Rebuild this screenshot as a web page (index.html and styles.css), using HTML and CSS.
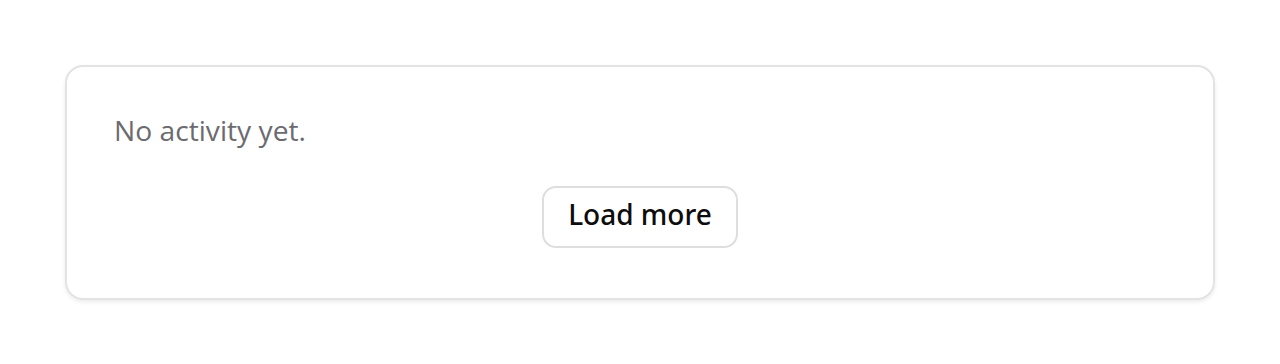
FILE: index.html
```html
<!DOCTYPE html>
<html lang="en">
<head>
<meta charset="utf-8">
<link rel="stylesheet" href="styles.css">
</head>
<body>
<main class="page">
  <section class="card">
    <p class="empty">No activity yet.</p>
    <div class="actions">
      <button class="load-more" type="button">Load more</button>
    </div>
  </section>
</main>
</body>
</html>
```
FILE: styles.css
```css
html, body {
  margin: 0;
  padding: 0;
  background: #ffffff;
}
body {
  font-family: "Open Sans", "Noto Sans", sans-serif;
}
.page {
  padding: 65px;
}
.card {
  border: 2px solid #e3e3e3;
  border-radius: 18px;
  box-shadow: 0 2px 4px rgba(0, 0, 0, 0.08);
  padding: 42px 47px 50px;
}
.empty {
  margin: 0;
  font-size: 28.2px;
  line-height: 42px;
  color: #6b6b70;
}
.actions {
  display: flex;
  justify-content: center;
  margin-top: 35px;
}
.load-more {
  font-family: "Noto Sans", "Open Sans", sans-serif;
  font-size: 28px;
  font-weight: 500;
  color: #0d0d0d;
  background: #fff;
  border: 2px solid #dedede;
  border-radius: 14px;
  padding: 7px 24px 13px;
  line-height: 38px;
  cursor: pointer;
}
```
